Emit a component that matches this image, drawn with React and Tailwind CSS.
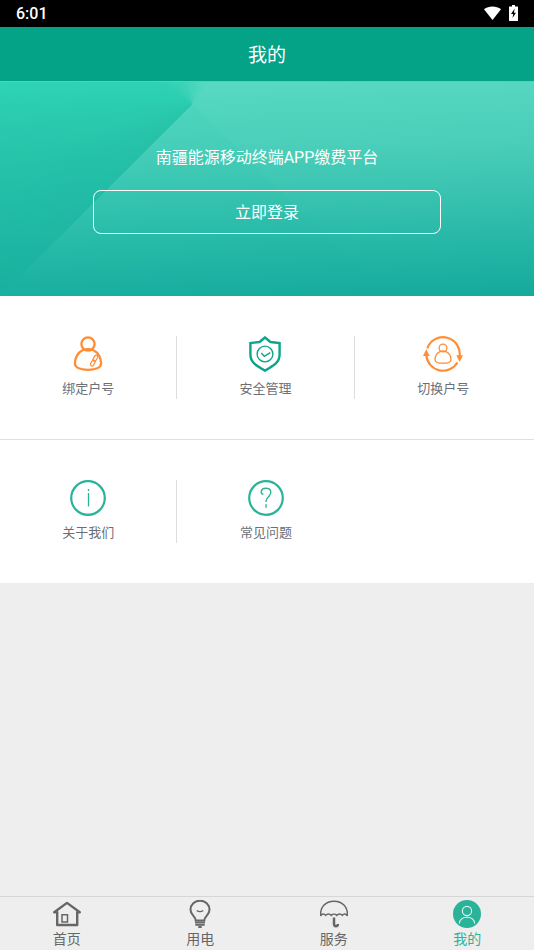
import { useState } from 'react';

const BindIcon = () => (
  <svg width="36" height="36" viewBox="0 0 36 36" fill="none" stroke="#ff8d35" strokeWidth="2.3" aria-hidden="true">
    <circle cx="18" cy="8" r="6.600" />
    <path d="M12.500 14.300C7.500 16.600 4.900 22.500 4.900 27.600c0 4.300 6.200 6.200 13.100 6.200s13.100-1.900 13.100-6.200c0-5.100-2.600-11-7.600-13.300-3.200-1.400-7.800-1.400-11 0z" />
    <rect x="-1.600" y="-3.200" width="3.200" height="6.400" rx="1.600" transform="translate(25.300 22.300) rotate(30)" strokeWidth="1.200" />
    <rect x="-1.600" y="-3.200" width="3.200" height="6.400" rx="1.600" transform="translate(22.800 27) rotate(30)" strokeWidth="1.200" />
  </svg>
);

const ShieldIcon = () => (
  <svg width="36" height="36" viewBox="0 0 36 36" fill="none" stroke="#0aa58a" aria-hidden="true">
    <path d="M18 1.500L12.500 6 3.400 7v11.500C3.400 26 8.500 29.500 18 34.600 27.500 29.500 32.600 26 32.600 18.500V7l-9.100-1z" strokeWidth="2.400" />
    <circle cx="18" cy="18" r="7.900" strokeWidth="1.400" />
    <path d="M14.300 17l3 3.300 6-3.700" strokeWidth="1.400" />
  </svg>
);

const SwitchIcon = () => (
  <svg width="40" height="36" viewBox="0 0 40 36" fill="none" stroke="#ff8d35" aria-hidden="true">
    <path d="M4.300 12.300A16.700 16.700 0 0 1 36.500 20.700" strokeWidth="2.200" />
    <path d="M34.400 26.500A16.700 16.700 0 0 1 3.400 19.700" strokeWidth="2.200" />
    <path d="M33.300 19.300h6.700L36.700 26z" fill="#ff8d35" stroke="none" />
    <path d="M0 20h6.700L3.300 13.300z" fill="#ff8d35" stroke="none" />
    <circle cx="20" cy="12" r="3.900" strokeWidth="1.300" />
    <path d="M17 15.600c-3.200 1.500-5 5-5 8.100 0 2.500 3.800 3.500 8 3.500s8-1 8-3.500c0-3.100-1.800-6.600-5-8.100-1.900-.8-4.100-.8-6 0z" strokeWidth="1.300" />
  </svg>
);

const AboutIcon = () => (
  <svg width="36" height="36" viewBox="0 0 36 36" fill="none" stroke="#2bb39a" aria-hidden="true">
    <circle cx="18" cy="18" r="16.800" strokeWidth="2.200" />
    <path d="M18.500 13v13.500M18.500 9v2" strokeWidth="1.300" />
  </svg>
);

const QuestionIcon = () => (
  <svg width="36" height="36" viewBox="0 0 36 36" fill="none" stroke="#2bb39a" aria-hidden="true">
    <circle cx="18" cy="18" r="16.800" strokeWidth="2.200" />
    <path d="M15.400 14.500C12 13.500 12.500 8.300 18 8.300c5 0 6.200 4.200 3.400 7.400-1.800 2-3.400 2.800-3.400 6.300M18 24.300v3.500" strokeWidth="1.400" />
  </svg>
);

const HomeIcon = () => (
  <svg width="28" height="28" viewBox="0 0 28 28" fill="none" stroke="#666" aria-hidden="true">
    <path d="M1.200 12.300h3V25h20V12.300h2.600L14 2.900z" strokeWidth="2.400" strokeLinejoin="round" />
    <path d="M9 14.800h5.500v7.200H9z" strokeWidth="1.500" />
  </svg>
);

const BulbIcon = () => (
  <svg width="28" height="28" viewBox="0 0 28 28" fill="none" stroke="#666" aria-hidden="true">
    <path d="M9.700 20.500c0-4.200-5.200-5.200-5.200-10.800a9.500 9 0 0 1 19 0c0 5.600-5.200 6.600-5.200 10.800z" strokeWidth="2" />
    <path d="M10.800 10.500c1.600 1.400 4.800 1.400 6.400 0" strokeWidth="1.200" />
    <path d="M9 22.500h10M9.300 24.900h9.400M12.300 27h3.400" strokeWidth="1.800" />
  </svg>
);

const UmbrellaIcon = () => (
  <svg width="28" height="28" viewBox="0 0 28 28" fill="none" stroke="#666" aria-hidden="true">
    <path d="M.7 16C-.2 7 5.500 1.200 14 1.200S28.200 7 27.300 16c-1-2.400-3.500-2.500-5-.6-1.500-1.900-4-1.900-5.500 0-1.500-1.500-4.100-1.500-5.600 0-1.500-1.900-4-1.900-5.500 0-1.500-1.900-4-1.800-5 .6z" strokeWidth="1.500" />
    <path d="M14 17.500v6.300c0 3.300 3.900 3 3.900.3" strokeWidth="2.500" />
  </svg>
);

const UserIcon = () => (
  <svg width="28" height="28" viewBox="0 0 28 28" fill="none" stroke="#e6f5f1" strokeWidth="1.100" aria-hidden="true">
    <circle cx="14" cy="14" r="14" fill="#2bb39a" stroke="none" />
    <circle cx="14" cy="11" r="4.600" />
    <path d="M6.300 23.500c.5-4.200 3.500-6.300 7.700-6.300s7.200 2.100 7.700 6.300" />
  </svg>
);

const menuRows = [
  [
    { label: '绑定户号', Icon: BindIcon, divider: true },
    { label: '安全管理', Icon: ShieldIcon, divider: true },
    { label: '切换户号', Icon: SwitchIcon },
  ],
  [
    { label: '关于我们', Icon: AboutIcon, divider: true },
    { label: '常见问题', Icon: QuestionIcon },
  ],
];

const tabs = [
  { label: '首页', Icon: HomeIcon },
  { label: '用电', Icon: BulbIcon },
  { label: '服务', Icon: UmbrellaIcon },
  { label: '我的', Icon: UserIcon },
];

function StatusBar() {
  return (
    <div className="flex h-[27px] items-center justify-between bg-black px-4 text-white">
      <span className="font-[Roboto] text-base font-medium">6:01</span>
      <div className="flex items-center gap-2 pb-0.5">
        <svg width="17" height="14" viewBox="0 0 17 14" fill="#fff" aria-hidden="true">
          <path d="M8.500 14L0 3.300C4.700-.5 12.300-.5 17 3.300z" />
        </svg>
        <svg width="9" height="16" viewBox="0 0 9 16" aria-hidden="true">
          <path d="M3 0h3v1.500h3V16H0V1.500h3z" fill="#fff" />
          <path d="M5.700 3.500L2 9h2.200l-.7 4L7 7.800H4.900z" fill="#000" />
        </svg>
      </div>
    </div>
  );
}

export default function App() {
  const [activeTab, setActiveTab] = useState('我的');

  return (
    <div className="flex min-h-screen flex-col bg-[#eeeeee] font-[Roboto,'Noto_Sans_CJK_SC',sans-serif]">
      <StatusBar />
      <header className="flex h-[55px] items-center justify-center border-b border-[#7dbcae] bg-[#04a287] pt-1">
        <h1 className="text-[19px] text-white">我的</h1>
      </header>

      <main className="flex-1">
        <section className="relative h-[214px] bg-[linear-gradient(176deg,#2fd3b5,#15aa9c)]">
          {/* light facets, fading out towards the bottom */}
          <div className="absolute inset-0 bg-[conic-gradient(from_225deg_at_36%_22px,rgba(0,90,70,0.06)_0deg,rgba(0,90,70,0)_50deg,rgba(255,255,255,0)_75deg,rgba(255,255,255,0.2)_175deg,rgba(255,255,255,0.2)_269deg,rgba(255,255,255,0.17)_270deg,rgba(255,255,255,0.17)_360deg)] [mask-image:linear-gradient(#000,rgba(0,0,0,0.85)_30%,rgba(0,0,0,0.25)_75%,transparent)]" />
          <div className="relative flex flex-col items-center pt-16 text-base text-white">
            <p className="leading-6">南疆能源移动终端APP缴费平台</p>
            <button className="mt-5 h-11 w-[65%] rounded-lg border border-white pt-0.5">立即登录</button>
          </div>
        </section>

        <div className="divide-y divide-[#e0e0e0] bg-white">
          {menuRows.map((row, i) => (
            <div key={i} className="grid grid-cols-3 py-10 pr-0.5">
              {row.map(({ label, Icon, divider }) => (
                <button
                  key={label}
                  className={`flex h-[63px] flex-col items-center justify-between text-[13px] leading-5 text-[#6b6f78] ${divider ? 'border-r border-[#dddddd]' : ''}`}
                >
                  <Icon />
                  {label}
                </button>
              ))}
            </div>
          ))}
        </div>
      </main>

      <nav className="grid grid-cols-4 border-t border-[#d6d6d6]">
        {tabs.map(({ label, Icon }) => (
          <button
            key={label}
            onClick={() => setActiveTab(label)}
            className={`flex flex-col items-center pt-[3px] text-sm leading-[22px] ${activeTab === label ? 'text-[#2bb39a]' : 'text-[#666666]'}`}
          >
            <Icon />
            {label}
          </button>
        ))}
      </nav>
    </div>
  );
}
